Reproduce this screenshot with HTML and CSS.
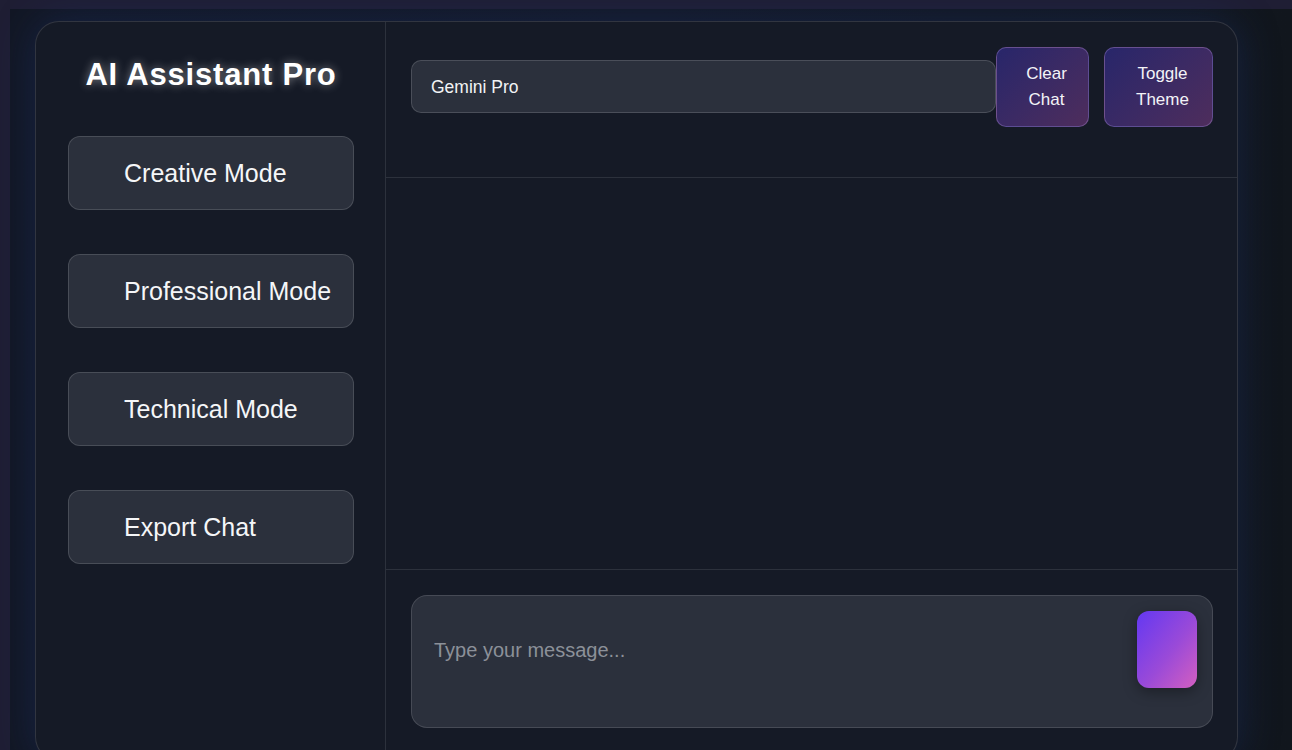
FILE: index.html
```html
<!DOCTYPE html>
<html lang="en">
<head>
<meta charset="utf-8">
<title>AI Assistant Pro</title>
<link rel="stylesheet" href="styles.css">
</head>
<body>
<div class="page">
  <div class="app">
    <aside class="sidebar">
      <h1 class="title">AI Assistant Pro</h1>
      <nav class="modes">
        <button class="mode-btn">Creative Mode</button>
        <button class="mode-btn">Professional Mode</button>
        <button class="mode-btn">Technical Mode</button>
        <button class="mode-btn">Export Chat</button>
      </nav>
    </aside>
    <main class="main">
      <header class="header">
        <div class="model-select">Gemini Pro</div>
        <div class="actions">
          <button class="action-btn action-clear">Clear<br>Chat</button>
          <button class="action-btn action-theme">Toggle<br>Theme</button>
        </div>
      </header>
      <section class="messages"></section>
      <footer class="composer">
        <div class="input-box">
          <span class="placeholder">Type your message...</span>
          <button class="send-btn" aria-label="Send"></button>
        </div>
      </footer>
    </main>
  </div>
</div>
</body>
</html>
```

FILE: styles.css
```css
html, body {
  margin: 0;
  padding: 0;
  height: 100%;
  overflow: hidden;
}
body {
  background: #1f1e34;
  font-family: "Liberation Sans", Arial, sans-serif;
  color: #f2f3f5;
}
.page {
  margin: 9px 0 0 10px;
  height: 741px;
  background: linear-gradient(90deg, #121724 0%, #131826 50%, #11161d 100%);
  padding: 12px 0 0 25px;
  box-sizing: border-box;
}
.app {
  width: 1203px;
  height: 740px;
  box-sizing: border-box;
  display: flex;
  background: #151a26;
  border: 1px solid rgba(255, 255, 255, 0.12);
  border-radius: 24px;
  box-shadow: 0 0 40px rgba(30, 55, 120, 0.4);
  overflow: hidden;
}
.sidebar {
  width: 350px;
  flex: none;
  box-sizing: border-box;
  border-right: 1px solid rgba(255, 255, 255, 0.1);
  padding: 33px 31px 0 32px;
}
.title {
  margin: 0 0 41px 0;
  text-align: center;
  font-size: 31px;
  font-weight: 700;
  letter-spacing: 0.8px;
  line-height: 40px;
  color: #ffffff;
  text-shadow: 0 0 10px rgba(255, 255, 255, 0.45);
}
.modes {
  display: flex;
  flex-direction: column;
  gap: 44px;
}
.mode-btn {
  height: 74px;
  box-sizing: border-box;
  background: #2b303c;
  border: 1px solid rgba(255, 255, 255, 0.14);
  border-radius: 12px;
  color: #f5f6f8;
  font-family: "Liberation Sans", Arial, sans-serif;
  font-size: 25px;
  text-align: left;
  padding: 0 0 0 55px;
  white-space: nowrap;
}
.main {
  flex: 1;
  display: flex;
  flex-direction: column;
  min-width: 0;
}
.header {
  height: 156px;
  flex: none;
  box-sizing: border-box;
  border-bottom: 1px solid rgba(255, 255, 255, 0.1);
  padding: 25px 24px 0 25px;
  display: flex;
  align-items: flex-start;
}
.model-select {
  flex: 1;
  margin-top: 13px;
  height: 53px;
  box-sizing: border-box;
  background: #2b303c;
  border: 1px solid rgba(255, 255, 255, 0.15);
  border-radius: 10px;
  padding: 1px 19px 0 19px;
  display: flex;
  align-items: center;
  font-size: 17.5px;
  color: #f2f3f5;
}
.actions {
  display: flex;
  gap: 15px;
}
.action-btn {
  height: 80px;
  box-sizing: border-box;
  background: linear-gradient(135deg, #28266a 0%, #3b2a64 50%, #4e2d5c 100%);
  border: 1px solid rgba(180, 150, 230, 0.35);
  border-radius: 10px;
  color: #f3f3f7;
  font-family: "Liberation Sans", Arial, sans-serif;
  font-size: 17px;
  line-height: 26px;
  text-align: center;
  padding: 0 0 0 8px;
}
.action-clear {
  width: 93px;
}
.action-theme {
  width: 109px;
}
.messages {
  flex: 1;
  border-bottom: 1px solid rgba(255, 255, 255, 0.1);
}
.composer {
  flex: none;
  padding: 25px 24px 32px 25px;
}
.input-box {
  height: 133px;
  box-sizing: border-box;
  background: #2b303c;
  border: 1px solid rgba(255, 255, 255, 0.13);
  border-radius: 16px;
  display: flex;
  align-items: flex-start;
  justify-content: space-between;
  padding: 15px 15px 0 22px;
}
.placeholder {
  margin-top: 28px;
  font-size: 20px;
  color: #8c9099;
}
.send-btn {
  width: 60px;
  height: 77px;
  border: none;
  border-radius: 12px;
  background: linear-gradient(to bottom right, #6338f2 0%, #9a4ad8 55%, #d45fc0 100%);
  box-shadow: 0 4px 14px rgba(0, 0, 0, 0.35);
}
```
